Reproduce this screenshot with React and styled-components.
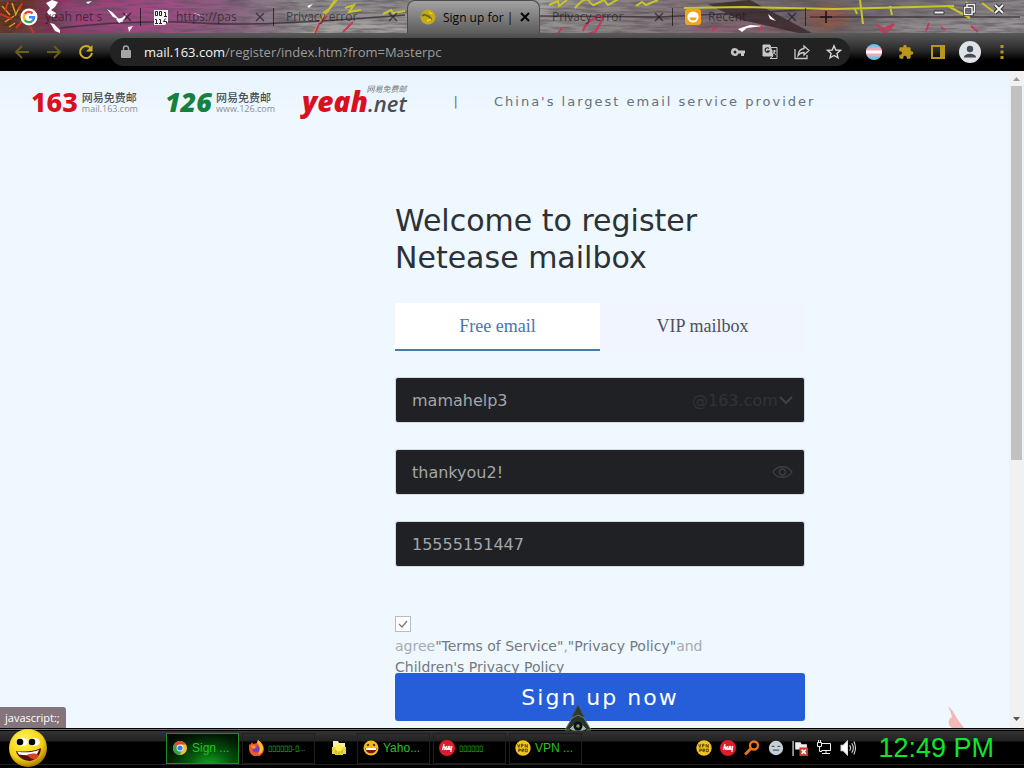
import React, { useState } from 'react'
import styled, { createGlobalStyle } from 'styled-components'

const GlobalStyle = createGlobalStyle`
  * {
    box-sizing: border-box;
  }
  body {
    margin: 0;
    font-family: 'DejaVu Sans', sans-serif;
  }
  button, input, select {
    font: inherit;
    margin: 0;
    padding: 0;
    border: none;
    background: none;
  }
  a {
    text-decoration: none;
  }
  svg {
    display: block;
    flex: none;
  }
`

const Screen = styled.div`
  display: flex;
  flex-direction: column;
  height: 100vh;
  overflow: hidden;
`

const TabStrip = styled.header`
  position: relative;
  flex: none;
  display: flex;
  justify-content: space-between;
  height: 33px;
  background: linear-gradient(90deg, #6d3a1d 0, #7e2d50 5%, #9c4f84 16%, #8b5f80 22%, #8d8a8c 29%, #94928f 54%, #82757a 66%, #6a6366 80%, #8a8789 100%);
`

const Graffiti = styled.svg`
  position: absolute;
  inset: 0;
  width: 100%;
  height: 100%;
`

const TabList = styled.div`
  position: relative;
  display: flex;
  min-width: 0;
  padding-left: 8px;
`

const Tab = styled.div`
  flex: 0 1 133px;
  width: 133px;
  min-width: 0;
  display: flex;
  align-items: center;
  gap: 7px;
  padding: 0 ${(props) => (props.$line ? '0' : '8px')} 0 12px;
  font-family: 'Open Sans', sans-serif;
  font-size: 12px;
  color: ${(props) => (props.$active ? '#050505' : 'rgba(25, 20, 25, 0.65)')};
  background: ${(props) => (props.$active ? 'linear-gradient(#a2a2a2, #5c5c5c)' : 'none')};
  border: ${(props) => (props.$active ? '1px solid #4b4b4b' : '0 solid transparent')};
  border-bottom: none;
  border-radius: ${(props) => (props.$active ? '8px 8px 0 0' : '0')};
`

const TabTitle = styled.span`
  flex: 1;
  min-width: 0;
  overflow: hidden;
  white-space: nowrap;
`

const TabLine = styled.span`
  flex: none;
  width: 1px;
  height: 18px;
  background: rgba(20, 15, 20, 0.7);
`

const TabButton = styled.button`
  flex: none;
  display: flex;
  align-items: center;
  justify-content: center;
  width: 12px;
  height: 33px;
  color: inherit;
`

const NewTab = styled(TabButton)`
  width: 40px;
  color: #1c1515;
`

const WindowControls = styled.div`
  position: relative;
  display: flex;
  gap: 8px;
  padding-right: 14px;
`

const WindowButton = styled.button`
  display: flex;
  align-items: center;
  justify-content: center;
  width: 22px;
  height: 18px;
`

const Toolbar = styled.nav`
  flex: none;
  display: flex;
  align-items: center;
  gap: 12px;
  height: 38px;
  padding: 0 12px;
  background: linear-gradient(#5a5a5a 0, #2a2a2a 45%, #000 70%);
`

const ToolButton = styled.button`
  flex: none;
  display: flex;
  align-items: center;
  justify-content: center;
  width: 20px;
  height: 24px;
`

const AddressBar = styled.div`
  flex: 1;
  min-width: 0;
  display: flex;
  align-items: center;
  gap: 12px;
  height: 28px;
  margin: 0 2px;
  padding: 0 6px 0 8px;
  border-radius: 14px;
  background: #222;
`

const UrlLink = styled.a`
  flex: 1;
  min-width: 0;
  overflow: hidden;
  white-space: nowrap;
  font-family: 'Open Sans', sans-serif;
  font-size: 13px;
  line-height: 20px;
  color: #9c9c9c;
`

const UrlHost = styled.span`
  color: #f4f4f4;
`

const Viewport = styled.div`
  position: relative;
  flex: 1;
  min-height: 0;
  display: flex;
`

const Page = styled.main`
  position: relative;
  flex: 1;
  min-width: 0;
  overflow: hidden;
  background: linear-gradient(#e8f4fc 0, #eff7ff 40px, #eff7ff 100%);
`

const SiteHeader = styled.div`
  display: flex;
  align-items: center;
  height: 62px;
  padding-left: 31px;
  gap: 27px;
`

const Brand = styled.a`
  display: flex;
  align-items: center;
  gap: 4px;
  color: ${(props) => props.$color};
`

const BrandNumber = styled.span`
  font-family: ${(props) => (props.$slanted ? "'Open Sans'" : "'Noto Sans'")}, sans-serif;
  font-size: 27px;
  line-height: 32px;
  font-weight: 800;
  font-style: ${(props) => (props.$slanted ? 'italic' : 'normal')};
`

const BrandText = styled.span`
  display: flex;
  flex-direction: column;
  font-family: 'Open Sans', sans-serif;
  font-size: 9px;
  line-height: 10px;
  color: #8a8f94;
`

const BrandName = styled.span`
  font-family: 'Noto Sans CJK SC', sans-serif;
  font-size: 11px;
  line-height: 14px;
  font-weight: 500;
  color: #4b5157;
`

const YeahBrand = styled.a`
  position: relative;
  display: flex;
  align-items: baseline;
  font-family: 'Open Sans', sans-serif;
  font-style: italic;
  font-weight: 800;
  font-size: 28px;
  line-height: 32px;
  color: #d9101f;
`

const YeahNet = styled.span`
  font-size: 22px;
  font-weight: 600;
  color: #4a4f54;
`

const YeahNote = styled.span`
  position: absolute;
  top: 0;
  right: 0;
  font-family: 'Noto Sans CJK SC', sans-serif;
  font-size: 8px;
  line-height: 8px;
  font-weight: 400;
  color: #777;
`

const Tagline = styled.p`
  display: flex;
  gap: 34px;
  margin: 0 0 0 20px;
  font-size: 13px;
  line-height: 20px;
  letter-spacing: 2px;
  white-space: nowrap;
  color: #66717a;
`

const Form = styled.form`
  width: 40%;
  min-width: 410px;
  margin-left: 395px;
  padding-top: 69px;
`

const Title = styled.h1`
  margin: 0 0 27px;
  font-size: 30px;
  line-height: 37px;
  font-weight: 400;
  color: #2c3135;
`

const MailTabs = styled.div`
  display: flex;
  margin-bottom: 26px;
`

const MailTab = styled.button`
  flex: 1;
  height: 48px;
  font-family: 'Liberation Serif', serif;
  font-size: 18px;
  color: ${(props) => (props.$active ? '#4a73b8' : '#4c5160')};
  background: ${(props) => (props.$active ? '#fff' : '#f0f5ff')};
  border-bottom: 2px solid ${(props) => (props.$active ? '#4a7aa8' : 'transparent')};
`

const Field = styled.div`
  display: flex;
  align-items: center;
  height: 46px;
  margin-bottom: 26px;
  padding: 0 10px 0 16px;
  background: #202124;
  border: 1px solid #d3dbe3;
  border-radius: 3px;
`

const FieldInput = styled.input`
  flex: 1;
  min-width: 0;
  height: 100%;
  font-size: 16px;
  color: #a3a6a9;
  outline: none;
`

const DomainSelect = styled.select`
  appearance: none;
  font-size: 16px;
  color: #303336;
`

const IconButton = styled.button`
  display: flex;
`

const Agreement = styled.div`
  height: 57px;
  margin-top: 49px;
  font-size: 14px;
  line-height: 21px;
  color: #a5acb3;
`

const AgreeBox = styled.input`
  display: block;
  appearance: none;
  width: 16px;
  height: 16px;
  margin-bottom: 4px;
  border: 1px solid #b9bdc1;
  background: #fff;
  &:checked {
    background: #fff url("data:image/svg+xml,%3Csvg xmlns='http://www.w3.org/2000/svg' viewBox='0 0 14 14'%3E%3Cpath d='M3 7l3 3 5-6' fill='none' stroke='%23777' stroke-width='1.2'/%3E%3C/svg%3E");
  }
`

const PolicyLink = styled.a`
  color: #737a80;
`

const SubmitButton = styled.button`
  position: relative;
  display: block;
  width: 100%;
  height: 48px;
  font-size: 22px;
  letter-spacing: 2px;
  color: #fff;
  background: #265ed9;
  border-radius: 3px;
`

const Splash = styled.svg`
  position: absolute;
  right: 45px;
  bottom: 0;
`

const ScrollTrack = styled.div`
  flex: none;
  display: flex;
  flex-direction: column;
  align-items: center;
  width: 15px;
  padding: 6px 0;
  gap: 4px;
  background: #f1f1f1;
`

const ScrollThumb = styled.div`
  width: 11px;
  flex: 0 1 58%;
  margin-bottom: auto;
  background: #c1c1c1;
`

const StatusBubble = styled.div`
  position: absolute;
  left: 0;
  bottom: 0;
  padding: 2px 6px 2px 5px;
  font-family: 'Open Sans', sans-serif;
  font-size: 11px;
  line-height: 17px;
  color: #fff;
  background: #84747b;
  border-radius: 0 3px 0 0;
`

const Cursor = styled.svg`
  position: absolute;
  left: 564px;
  bottom: -4px;
  z-index: 2;
`

const Taskbar = styled.footer`
  flex: none;
  display: flex;
  align-items: center;
  height: 40px;
  padding: 0 30px 0 8px;
  background: linear-gradient(#000 0 1px, #777 1px 2px, #000 2px 3px, #333 3px, #222 13px, #000 14px, #000 36px, #222 36px 37px, #000 37px);
`

const StartButton = styled.button`
  display: flex;
  margin-right: 118px;
`

const TaskList = styled.div`
  display: flex;
  align-items: center;
  gap: 3px;
  flex: 1;
  min-width: 0;
`

const TaskButton = styled.button`
  flex: none;
  display: flex;
  align-items: center;
  justify-content: ${(props) => (props.$small ? 'center' : 'flex-start')};
  gap: 4px;
  width: ${(props) => (props.$small ? '36px' : '73px')};
  height: 31px;
  padding: 0 0 0 5px;
  white-space: nowrap;
  font-family: 'Liberation Sans', sans-serif;
  font-size: ${(props) => (props.$tiny ? '8px' : '12px')};
  color: #22c522;
  border: 1px solid ${(props) => (props.$small ? 'transparent' : props.$active ? '#159020' : '#202020')};
  background: ${(props) =>
    props.$active ? 'radial-gradient(ellipse at 60% 115%, #16b527, #045a0d 35%, #001a02 70%, #000 100%)' : 'none'};
`

const Tray = styled.div`
  display: flex;
  align-items: center;
  gap: 8px;
`

const Clock = styled.time`
  margin-left: 22px;
  font-family: 'Liberation Sans', sans-serif;
  font-size: 27px;
  line-height: 32px;
  white-space: nowrap;
  color: #10e62b;
`

const Cross = ({ size = 10, width = 1.6 }) => (
  <svg width={size} height={size} viewBox="0 0 10 10" stroke="currentColor" strokeWidth={width}>
    <path d="M1 1l8 8M9 1l-8 8" />
  </svg>
)

const GoogleIcon = () => (
  <svg width="18" height="18" viewBox="0 0 18 18" fill="none" strokeWidth="2.4">
    <circle cx="9" cy="9" r="8.5" fill="#fff" />
    <path d="M12.6 5.4A5 5 0 0 0 4.8 6.2" stroke="#ea4335" />
    <path d="M4.8 6.2a5 5 0 0 0 0 5.6" stroke="#fbbc05" />
    <path d="M4.8 11.8a5 5 0 0 0 7.6 1" stroke="#34a853" />
    <path d="M12.4 12.8A5 5 0 0 0 14 9.2H9" stroke="#4285f4" />
  </svg>
)

// ones and zeros on a torn page
const BinaryIcon = () => (
  <svg width="16" height="16" viewBox="0 0 16 16" fill="none" stroke="#222">
    <path d="M1 1h14v12l-3 3H1z" fill="#f3f3f3" stroke="none" />
    <path d="M2.5 2.5h2v4h-2zM6.5 2.5h2v4h-2zM11 3.5h1.500V7M11 7.500h3" />
    <path d="M2 10.500h1.500v4M2 14.500h3M6 10.500h1.500v4M6 14.500h3M12.500 9.500l-2 3h3v2" />
  </svg>
)

const GlobeIcon = () => (
  <svg width="16" height="16" viewBox="0 0 16 16">
    <circle cx="8" cy="8" r="7.5" fill="#c5aa16" />
    <path d="M2 7c3-3 4 0 6 0s1 3 4 3" fill="none" stroke="#6d6529" strokeWidth="2" />
    <path d="M7 12l4-2M9 3l3 2" stroke="#ead23c" strokeWidth="1.5" />
  </svg>
)

const MailIcon = () => (
  <svg width="16" height="16" viewBox="0 0 16 16">
    <rect width="16" height="16" rx="3" fill="#f5a21b" />
    <circle cx="8" cy="8" r="5.6" fill="#fff" />
    <path d="M4.500 8.500a3.500 3 0 0 0 7 0z" fill="#f5a21b" />
  </svg>
)

const ArrowIcon = ({ flip }) => (
  <svg width="16" height="16" viewBox="0 0 16 16" fill="none" stroke="#6a5d1d" strokeWidth="1.8">
    <path d={flip ? 'M1 8h13M8 2l6 6-6 6' : 'M15 8H2M8 2L2 8l6 6'} />
  </svg>
)

const ReloadIcon = () => (
  <svg width="16" height="16" viewBox="0 0 16 16">
    <path d="M13 4.5A6 6 0 1 0 14 9" fill="none" stroke="#d1ad20" strokeWidth="2" />
    <path d="M14.5 1v6.5H8z" fill="#d1ad20" />
  </svg>
)

const LockIcon = () => (
  <svg width="14" height="14" viewBox="0 0 14 14">
    <rect x="3" y="5" width="10" height="8" rx="1" fill="#a5a5a5" />
    <path d="M5.5 5V3.5a2.5 2.5 0 0 1 5 0V5" fill="none" stroke="#a5a5a5" strokeWidth="1.5" />
  </svg>
)

const KeyIcon = () => (
  <svg width="16" height="16" viewBox="0 0 16 16">
    <path
      d="M5 4a4 4 0 1 0 3.6 5.5H11V12h3V9.5h1v-3H8.6A4 4 0 0 0 5 4zm0 2.5a1.5 1.5 0 1 1 0 3 1.5 1.5 0 0 1 0-3z"
      fill="#c5c5c5"
      fillRule="evenodd"
    />
  </svg>
)

const TranslateIcon = () => (
  <svg width="16" height="16" viewBox="0 0 16 16" fill="none" stroke="#c8c8c8">
    <path d="M1 1h7l3 11H1z" fill="#c8c8c8" />
    <path d="M9 3.5h6v11H8l3-2.5" />
    <path d="M7 4.5a2.2 2.2 0 1 0 .3 2.5H5" stroke="#222" strokeWidth="1.2" />
    <path d="M10 7h4.5M12.5 6v1c0 2-1 3-2 3.5M11.5 8l2.5 3" />
  </svg>
)

const ShareIcon = () => (
  <svg width="16" height="16" viewBox="0 0 16 16" fill="none" stroke="#c8c8c8" strokeWidth="1.3">
    <path d="M1 5v9.5h12V11" />
    <path d="M10 2l5 4.500-5 4.500V8.500c-3 0-4.500 1-6 3 .4-4 2.500-6.500 6-7z" />
  </svg>
)

const StarIcon = () => (
  <svg width="16" height="16" viewBox="0 0 16 16" fill="none" stroke="#d5d5d5" strokeWidth="1.4">
    <path d="M8 1.8l1.8 4.2 4.6.4-3.5 3 1.1 4.5L8 11.500l-4 2.400 1.100-4.500-3.500-3 4.600-.4z" />
  </svg>
)

const FlagIcon = () => (
  <svg width="16" height="16" viewBox="0 0 16 16">
    <clipPath id="flag">
      <circle cx="8" cy="8" r="8" />
    </clipPath>
    <g clipPath="url(#flag)">
      <path d="M0 0h16v16H0z" fill="#6cc5e8" />
      <path d="M0 3.5h16v9H0z" fill="#f0a8b8" />
      <path d="M0 6.5h16v3H0z" fill="#fff" />
    </g>
  </svg>
)

const PuzzleIcon = () => (
  <svg width="16" height="16" viewBox="0 0 24 24">
    <path
      d="M20.5 11H19V7a2 2 0 0 0-2-2h-4V3.5a2.5 2.5 0 0 0-5 0V5H4a2 2 0 0 0-2 2v3.8h1.5a2.7 2.7 0 0 1 0 5.4H2V20c0 1.1.9 2 2 2h3.8v-1.5a2.7 2.7 0 0 1 5.4 0V22H17a2 2 0 0 0 2-2v-4h1.5a2.5 2.5 0 0 0 0-5z"
      fill="#b8971b"
    />
  </svg>
)

const PanelIcon = () => (
  <svg width="14" height="14" viewBox="0 0 14 14">
    <path d="M1 1h12v12H1z" fill="none" stroke="#b8971b" strokeWidth="2" />
    <path d="M9 1h4v12H9z" fill="#b8971b" />
  </svg>
)

const AvatarIcon = () => (
  <svg width="22" height="22" viewBox="0 0 22 22">
    <circle cx="11" cy="11" r="11" fill="#dfe3e8" />
    <circle cx="11" cy="8" r="3.2" fill="#454b52" />
    <path d="M5 16.5c0-5 12-5 12 0z" fill="#454b52" />
  </svg>
)

const DotsIcon = () => (
  <svg width="4" height="14" viewBox="0 0 4 14" fill="#b8971b">
    <path d="M.5 0h3v3h-3zM.5 5.5h3v3h-3zM.5 11h3v3h-3z" />
  </svg>
)

const EyeIcon = () => (
  <svg width="22" height="14" viewBox="0 0 22 14" fill="none" stroke="#3c4043" strokeWidth="1.4">
    <path d="M1 7c4-7 15-7 19 0-4 7-15 7-19 0z" />
    <circle cx="10.5" cy="7" r="3" />
  </svg>
)

const SmileyIcon = () => (
  <svg width="40" height="38" viewBox="0 0 40 38">
    <defs>
      <radialGradient id="face" cx=".4" cy=".3" r=".75">
        <stop offset="0" stopColor="#fff75a" />
        <stop offset=".65" stopColor="#f3d010" />
        <stop offset="1" stopColor="#9a6a00" />
      </radialGradient>
    </defs>
    <circle cx="20" cy="19" r="19" fill="url(#face)" />
    <ellipse cx="14" cy="13" rx="6" ry="4" fill="#fff" />
    <ellipse cx="26" cy="13" rx="6" ry="4" fill="#fff" />
    <circle cx="12" cy="13" r="3.3" />
    <circle cx="24" cy="13" r="3.3" />
    <path d="M8 22c8 1 17 1 25-3 0 8-6 12-11 13-6 0-13-4-14-10z" fill="#53100a" />
    <path d="M9 22.5c8 1.500 15 1 22-1.500l-2 4c-6 1.500-13 1.500-18 .5z" fill="#fff" />
    <path d="M19 26c4-2 10-2 11 0 1 5-6 6-11 0z" fill="#df3b2c" />
  </svg>
)

const ChromeIcon = () => (
  <svg width="16" height="16" viewBox="-1 -1 16 16">
    <circle cx="7" cy="7" r="7" fill="#f1c232" />
    <path d="M7 7L1 3.5A7 7 0 0 1 13 3.5H7z" fill="#e04434" />
    <path d="M7 7L1 3.5A7 7 0 0 0 6.5 14L10 8z" fill="#34a04b" />
    <circle cx="7" cy="7" r="3.4" fill="#fff" />
    <circle cx="7" cy="7" r="2.6" fill="#3b7ded" />
  </svg>
)

const FirefoxIcon = () => (
  <svg width="16" height="16" viewBox="0 0 16 16">
    <path d="M1 4l1 1 2-3 1 2 4-1 1-3c3 2 6 5 6 9a7.5 7.5 0 0 1-15 0c0-2 0-3 0-5z" fill="#f4582a" />
    <path d="M10 0c4 3 5 6 5 9 0 3-3 5-5 5 3-3 2-9-1-11z" fill="#ffc22b" />
    <circle cx="8" cy="9" r="3.5" fill="#7542c4" />
    <path d="M3 6c3-1 4 0 6 1-2 0-2 2-4 2z" fill="#ff9a24" />
  </svg>
)

const FolderIcon = () => (
  <svg width="18" height="16" viewBox="0 0 18 16">
    <path d="M3 1h5l1 2h6v5H3z" fill="#f4eeb0" />
    <path d="M2 7h4v7H2zM12 7h4v7h-4zM5 10h8v5H5z" fill="#e6d83c" />
    <circle cx="9" cy="8" r="3.5" fill="#fff04d" />
    <path d="M6 10v4M9 11v4M12 10v4" stroke="#b09c20" strokeWidth=".8" />
  </svg>
)

const LaughIcon = () => (
  <svg width="16" height="16" viewBox="0 0 16 16">
    <circle cx="8" cy="8" r="7.5" fill="#f3b922" />
    <path d="M4 5.5l2-1M10 4.5l2 1" stroke="#3a1600" strokeWidth="1.5" />
    <path d="M2.5 8h11c0 7-11 7-11 0z" fill="#7c1610" />
    <path d="M3 8h10v2H3z" fill="#fff" />
  </svg>
)

const HyIcon = () => (
  <svg width="16" height="16" viewBox="0 0 16 16">
    <circle cx="8" cy="8" r="8" fill="#e01b2b" />
    <path
      d="M5 4L3.5 10M4 8q2-2 2 0l-.5 2M7.5 6L7 9q1 1 2-1l.5-2-.5 4M11 6l-.7 3q1 1 2-1l.5-2-1 6"
      fill="none"
      stroke="#fff"
      strokeWidth="1.3"
    />
  </svg>
)

const VpnIcon = () => (
  <svg width="16" height="16" viewBox="0 0 15 15">
    <circle cx="7.5" cy="7.5" r="7.2" fill="#f2c41d" />
    <path
      d="M2.5 4l1 3 1-3M6 7V4h1.5v1.5H6M9.5 7V4l2 3V4M3.5 11V8.5H5V10H3.5M6.5 11V8.5H8V10H6.5l1.5 1M9.5 8.5h2V11h-2z"
      fill="none"
      stroke="#54420b"
      strokeWidth=".9"
    />
  </svg>
)

const SearchIcon = () => (
  <svg width="16" height="16" viewBox="0 0 16 16" fill="none" stroke="#e8741a" strokeWidth="2.4">
    <circle cx="10" cy="5.5" r="4" />
    <path d="M7 8.5l-6 6" strokeWidth="3" />
  </svg>
)

const GhostIcon = () => (
  <svg width="16" height="16" viewBox="0 0 15 15">
    <circle cx="7.5" cy="7.5" r="6.7" fill="#c5d0d7" />
    <path d="M3.5 6H6M9 6h2.5M4.5 9.500h6" stroke="#4e5a63" strokeWidth="1.2" />
  </svg>
)

const AlertFlagIcon = () => (
  <svg width="16" height="16" viewBox="0 0 15 15">
    <path d="M1 1v14" stroke="#fff" />
    <path d="M3 2h5l1 2h5v5H3z" fill="#eee" />
    <path d="M7 7h8v8H7z" fill="#d83324" />
    <path d="M9 9l4 4M13 9l-4 4" stroke="#fff" strokeWidth="1.5" />
  </svg>
)

const NetworkIcon = () => (
  <svg width="16" height="16" viewBox="0 0 16 16" fill="none" stroke="#eee">
    <path d="M6 3.5h8.500v7H5.500M10 11v3M6 13.500h8M3.500 7v4.500H6" />
    <path d="M1.500 2.500h4v4h-4zM2.500 0v2M4.500 0v2" />
  </svg>
)

const SpeakerIcon = () => (
  <svg width="16" height="16" viewBox="0 0 15 15" fill="none" stroke="#ddd">
    <path d="M1 5h2l4-4v13L3 10H1z" fill="#fff" />
    <path d="M9 5q2 2.5 0 5M11 3q3 4.5 0 9M13 1.5q3 6 0 12" />
  </svg>
)

const UpDown = ({ down }) => (
  <svg width="7" height="5" viewBox="0 0 7 5" fill={down ? '#555' : '#9a9a9a'}>
    <path d={down ? 'M0 0h7L3.5 4z' : 'M0 4h7L3.5 0z'} />
  </svg>
)

const tabs = [
  { title: 'yeah net s', icon: <GoogleIcon />, line: true },
  { title: 'https://pas', icon: <BinaryIcon />, line: true },
  { title: 'Privacy error' },
  { title: 'Sign up for |', icon: <GlobeIcon />, active: true },
  { title: 'Privacy error', line: true },
  { title: 'Recent', icon: <MailIcon />, line: true },
]

const extensions = [
  { label: 'Flag', icon: <FlagIcon /> },
  { label: 'Extensions', icon: <PuzzleIcon /> },
  { label: 'Side panel', icon: <PanelIcon /> },
  { label: 'Profile', icon: <AvatarIcon /> },
  { label: 'Menu', icon: <DotsIcon /> },
]

const tasks = [
  { text: 'Sign ...', icon: <ChromeIcon />, active: true },
  { text: '▯▯▯▯▯▯-▯...', icon: <FirefoxIcon />, tiny: true },
  { icon: <FolderIcon /> },
  { text: 'Yaho...', icon: <LaughIcon /> },
  { text: '▯▯▯▯▯▯', icon: <HyIcon />, tiny: true },
  { text: 'VPN ...', icon: <VpnIcon /> },
]

// painted wooden boards behind the tabs
const Wallpaper = () => (
  <Graffiti viewBox="0 0 1024 33" preserveAspectRatio="xMidYMid slice" fill="none" aria-hidden="true">
    <defs>
      <filter id="smear" x="-20%" y="-50%" width="140%" height="200%">
        <feGaussianBlur stdDeviation="4" />
      </filter>
      <filter id="grain" x="0" y="0" width="100%" height="100%">
        <feTurbulence type="fractalNoise" baseFrequency="0.04 0.35" numOctaves="3" seed="4" />
        <feColorMatrix values="0 0 0 0 0.1  0 0 0 0 0.08  0 0 0 0 0.1  1.6 0 0 0 -0.6" />
      </filter>
    </defs>
    <g filter="url(#smear)">
      <path d="M0 0h34l-8 14-10 19H0z" fill="#5d2a12" />
      <path d="M60 0h110l30 12-60 21H60z" fill="#a8488c" opacity=".6" />
      <path d="M410 0h140v10H410zM300 22h110v11H300z" fill="#bdbab6" opacity=".6" />
      <ellipse cx="828" cy="18" rx="22" ry="12" fill="#b0502f" opacity=".6" />
      <path d="M880 20h144v13H880z" fill="#a5a2a4" opacity=".6" />
      <path d="M690 24h110v9H690z" fill="#a04a68" opacity=".5" />
    </g>
    <path d="M0 0h1024v33H0z" filter="url(#grain)" />
    <path d="M708 4l42-4 62 33h-14l-60-14z" fill="#332326" opacity=".75" />
    <path d="M60 28q80-9 140-5t205-8M540 16l120 1 160-8M810 17h210" stroke="#3a2c34" strokeWidth="1.5" opacity=".8" />
    <path d="M2 6l8 9M12 3l4 12M5 22l9-6M20 6l-5 10M9 27l6-4" stroke="#c9a722" strokeWidth="1.5" />
    <path d="M0 14l12 5M8 2l-3 9M22 3l-3 7M16 28l8-9M30 27l4 6" stroke="#cc3527" strokeWidth="2" />
    <path
      d="M46 3l6-3 6 2-3 5-4 3 5 3-2 5-5-3-2-3 3-4zM50 23l4 1 6 6v3l-5-2zM107 9l5 3 8 8-7-3zM116 19l6-1 5-5-3 8-5 2zM128 27l5-1-4 6zM86 2l6-1-4 3zM194 13l9 3-7-1zM738 29l12-4 15 1-18 2-5 4zM768 14l8 7-6-2zM860 20l4 3-3-2zM992 2l3 2zM307 6l6-2-4 4z"
      fill="#fff"
    />
    <path
      d="M335 0l-6 9-6 4M345 8l9-3-5 7 12-2M383 14l8-4 2 3 12-2M549 5l9-4 1 5 8-6M575 8q10-12 14-7t5 4 10-5l4 5 14-8M636 6l6-4 4 3 12-5M684 8l60-1 90 2 120-3M860 0l3 24M855 9l2 5M890 6l2 9M948 6l22 12M966 2l6 8M982 3l12 9"
      stroke="#c7c529"
      strokeWidth="2"
    />
    <path d="M337 0l-14 17-10 17" stroke="#c7c529" strokeWidth="1.5" />
    <path
      d="M315 33l4-9 8-8M343 32l10-10M583 31q3-10 14-14t-2 15l-8 2M558 33l4-5M712 31l5-4M759 31l3-5M876 25l8 4 10-5-8 9-6-3M926 31l3-8M941 27l4 3M971 26l7 6"
      stroke="#c8365a"
      strokeWidth="2"
    />
  </Graffiti>
)

const BrowserTabs = () => (
  <TabStrip>
    <Wallpaper />
    <TabList>
      {tabs.map((tab, i) => (
        <Tab key={i} $active={tab.active} $line={tab.line}>
          {tab.icon}
          <TabTitle>{tab.title}</TabTitle>
          <TabButton aria-label="Close tab">
            <Cross width={tab.active ? 2 : 1.4} />
          </TabButton>
          {tab.line && <TabLine />}
        </Tab>
      ))}
      <NewTab aria-label="New tab">
        <svg width="12" height="12" viewBox="0 0 12 12" stroke="currentColor" strokeWidth="1.6">
          <path d="M6 0v12M0 6h12" />
        </svg>
      </NewTab>
    </TabList>
    <WindowControls>
      <WindowButton aria-label="Minimize">
        <svg width="12" height="12" viewBox="0 0 12 12">
          <path d="M1 8h10v3H1z" fill="#eee" stroke="#333" />
        </svg>
      </WindowButton>
      <WindowButton aria-label="Restore">
        <svg width="13" height="13" viewBox="0 0 13 13" fill="none">
          <path d="M4 4V1.5h7.5V9H9M1.5 4.5H9v7H1.5z" stroke="#333" strokeWidth="3" />
          <path d="M4 4V1.5h7.5V9H9M1.5 4.5H9v7H1.5z" stroke="#eee" strokeWidth="1.5" />
        </svg>
      </WindowButton>
      <WindowButton aria-label="Close window">
        <svg width="12" height="12" viewBox="0 0 12 12">
          <path d="M2 2l8 8M10 2l-8 8" stroke="#333" strokeWidth="4" />
          <path d="M2 2l8 8M10 2l-8 8" stroke="#eee" strokeWidth="2" />
        </svg>
      </WindowButton>
    </WindowControls>
  </TabStrip>
)

const BrowserToolbar = () => (
  <Toolbar>
    <ToolButton aria-label="Back">
      <ArrowIcon />
    </ToolButton>
    <ToolButton aria-label="Forward">
      <ArrowIcon flip />
    </ToolButton>
    <ToolButton aria-label="Reload">
      <ReloadIcon />
    </ToolButton>
    <AddressBar>
      <LockIcon />
      <UrlLink href="#">
        <UrlHost>mail.163.com</UrlHost>/register/index.htm?from=Masterpc
      </UrlLink>
      <ToolButton aria-label="Passwords">
        <KeyIcon />
      </ToolButton>
      <ToolButton aria-label="Translate">
        <TranslateIcon />
      </ToolButton>
      <ToolButton aria-label="Share">
        <ShareIcon />
      </ToolButton>
      <ToolButton aria-label="Bookmark">
        <StarIcon />
      </ToolButton>
    </AddressBar>
    {extensions.map((item) => (
      <ToolButton key={item.label} aria-label={item.label}>
        {item.icon}
      </ToolButton>
    ))}
  </Toolbar>
)

const RegisterForm = () => {
  const [mode, setMode] = useState('free')
  const [formData, setFormData] = useState({
    name: 'mamahelp3',
    password: 'thankyou2!',
    phone: '15555151447',
    agree: true,
  })

  const update = (key) => (e) => setFormData({ ...formData, [key]: e.target.value })

  return (
    <Form onSubmit={(e) => e.preventDefault()}>
      <Title>
        Welcome to register
        <br />
        Netease mailbox
      </Title>
      <MailTabs>
        <MailTab type="button" $active={mode === 'free'} onClick={() => setMode('free')}>
          Free email
        </MailTab>
        <MailTab type="button" $active={mode === 'vip'} onClick={() => setMode('vip')}>
          VIP mailbox
        </MailTab>
      </MailTabs>
      <Field>
        <FieldInput aria-label="Email address" value={formData.name} onChange={update('name')} />
        <DomainSelect aria-label="Domain">
          <option>@163.com</option>
        </DomainSelect>
        <svg width="16" height="10" viewBox="0 0 16 10" fill="none" stroke="#3e4245" strokeWidth="2">
          <path d="M2 2l6 6 6-6" />
        </svg>
      </Field>
      <Field>
        <FieldInput aria-label="Password" value={formData.password} onChange={update('password')} />
        <IconButton type="button" aria-label="Show password">
          <EyeIcon />
        </IconButton>
      </Field>
      <Field>
        <FieldInput aria-label="Phone number" value={formData.phone} onChange={update('phone')} />
      </Field>
      <Agreement>
        <AgreeBox
          id="agree"
          type="checkbox"
          checked={formData.agree}
          onChange={(e) => setFormData({ ...formData, agree: e.target.checked })}
        />
        <label htmlFor="agree">agree</label>
        <PolicyLink href="#">"Terms of Service"</PolicyLink>,<PolicyLink href="#">"Privacy Policy"</PolicyLink>and
        <br />
        <PolicyLink href="#">Children's Privacy Policy</PolicyLink>
      </Agreement>
      <SubmitButton type="submit">Sign up now</SubmitButton>
    </Form>
  )
}

const App = () => (
  <Screen>
    <GlobalStyle />
    <BrowserTabs />
    <BrowserToolbar />
    <Viewport>
      <Page>
        <SiteHeader>
          <Brand href="#" $color="#d9101f">
            <BrandNumber>163</BrandNumber>
            <BrandText>
              <BrandName>网易免费邮</BrandName>
              mail.163.com
            </BrandText>
          </Brand>
          <Brand href="#" $color="#16803f">
            <BrandNumber $slanted>126</BrandNumber>
            <BrandText>
              <BrandName>网易免费邮</BrandName>
              www.126.com
            </BrandText>
          </Brand>
          <YeahBrand href="#">
            yeah<YeahNet>.net</YeahNet>
            <YeahNote>网易免费邮</YeahNote>
          </YeahBrand>
          <Tagline>
            <span>|</span>
            <span>China's largest email service provider</span>
          </Tagline>
        </SiteHeader>
        <RegisterForm />
        <Splash width="30" height="22" viewBox="0 0 30 22" fill="#f3b9b5" aria-hidden="true">
          <path d="M14 0c4 3 7 9 10 14l6 8H18c-5-4-4-9 0-11-1-4-2-7-4-11z" />
        </Splash>
      </Page>
      <ScrollTrack>
        <UpDown />
        <ScrollThumb />
        <UpDown down />
      </ScrollTrack>
      <StatusBubble>javascript:;</StatusBubble>
      <Cursor width="28" height="28" viewBox="0 0 28 28" aria-hidden="true">
        <path d="M14 1l6 12h-12z" fill="#2d3a2c" stroke="#45523f" />
        <path d="M8 14L1 26h5q8-9 16 0h5l-7-12-6-3z" fill="#26352c" stroke="#6f7c70" />
        <path d="M5 25q9-12 18 0l-4 2H9z" fill="#a9b3aa" stroke="#28332b" />
        <circle cx="14" cy="22" r="4.5" fill="#0c110d" />
        <circle cx="14" cy="22" r="1.8" fill="#839485" />
      </Cursor>
    </Viewport>
    <Taskbar>
      <StartButton aria-label="Start">
        <SmileyIcon />
      </StartButton>
      <TaskList>
        {tasks.map((task, i) => (
          <TaskButton
            key={i}
            $active={task.active}
            $small={!task.text}
            $tiny={task.tiny}
            aria-label={task.text ? undefined : 'Files'}
          >
            {task.icon}
            {task.text}
          </TaskButton>
        ))}
      </TaskList>
      <Tray>
        <VpnIcon />
        <HyIcon />
        <SearchIcon />
        <GhostIcon />
        <AlertFlagIcon />
        <NetworkIcon />
        <SpeakerIcon />
      </Tray>
      <Clock>12:49 PM</Clock>
    </Taskbar>
  </Screen>
)

export default App
